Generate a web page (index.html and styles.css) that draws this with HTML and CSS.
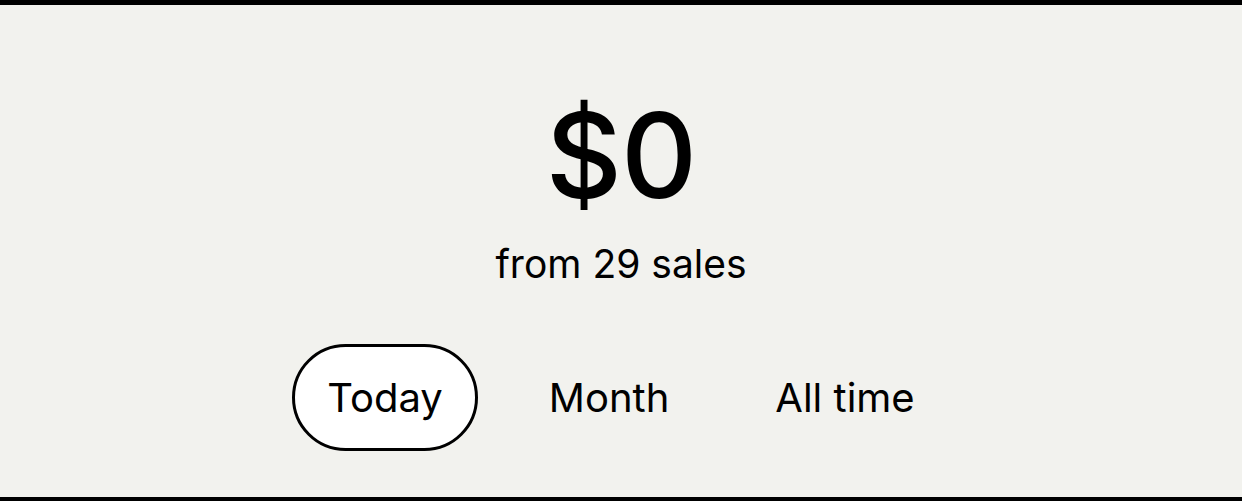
FILE: index.html
```html
<!DOCTYPE html>
<html lang="en">
<head>
  <meta charset="UTF-8" />
  <meta name="viewport" content="width=device-width, initial-scale=1.0"/>
  <title>Sales</title>
  <link rel="stylesheet" href="styles.css">
</head>
<body>
  <section class="stats">
    <div class="amount">$0</div>
    <div class="count">from 29 sales</div>
    <div class="tabs">
      <button class="tab active">Today</button>
      <button class="tab">Month</button>
      <button class="tab">All time</button>
    </div>
  </section>
</body>
</html>
```

FILE: styles.css
```css
:root {
  --bg: #f2f2ee;
  --text: #000000;
  --border: #000000;
}

body {
  margin: 0;
  font-family: "Inter", "DejaVu Sans", sans-serif;
  background-color: var(--bg);
  color: var(--text);
}

.stats {
  box-sizing: border-box;
  height: 501px;
  border-top: 5px solid var(--border);
  border-bottom: 4px solid var(--border);
  display: flex;
  flex-direction: column;
  align-items: center;
  padding-top: 75px;
}

.amount {
  font-size: 118px;
  font-weight: 500;
  line-height: 150px;
  letter-spacing: -1px;
}

.count {
  font-size: 39px;
  line-height: 44px;
  margin-top: 12px;
}

.tabs {
  display: flex;
  gap: 36px;
  margin-top: 58px;
}

.tab {
  font-family: inherit;
  font-size: 40px;
  line-height: 48px;
  color: var(--text);
  background: none;
  border: 3px solid transparent;
  border-radius: 60px;
  padding: 26.5px 32px;
  cursor: pointer;
}

.tab.active {
  background: #ffffff;
  border-color: var(--border);
}
```
